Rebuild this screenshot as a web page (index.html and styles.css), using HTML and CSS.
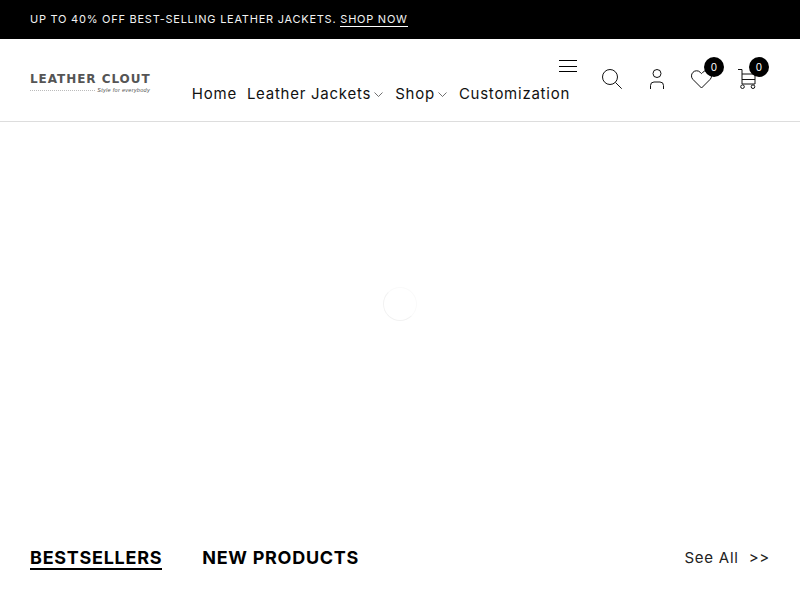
FILE: index.html
```html
<!DOCTYPE html>
<html lang="en">
<head>
    <meta charset="UTF-8">
    <meta name="viewport" content="width=device-width, initial-scale=1.0">
    <title>Leather Clout</title>
    <link rel="stylesheet" href="styles.css">
</head>
<body>
    <div class="announcement">
        UP TO 40% OFF BEST-SELLING LEATHER JACKETS. <a href="#" class="announcement-link">SHOP NOW</a>
    </div>

    <header class="site-header">
        <a href="#" class="logo">
            <span class="logo-name">LEATHER CLOUT</span>
            <span class="logo-tagline"><span class="logo-line"></span><span class="logo-tag-text">Style for everybody</span></span>
        </a>

        <div class="header-menu">
            <button class="menu-toggle" aria-label="Menu">
                <svg width="18" height="12" viewBox="0 0 18 12" fill="none" stroke="#000" stroke-width="1"><path d="M0 .5h18M0 6.5h18M0 11.5h18"/></svg>
            </button>
            <nav class="main-nav">
                <a href="#">Home</a>
                <a href="#">Leather Jackets<svg class="chevron" width="9" height="5" viewBox="0 0 9 5" fill="none" stroke="#333" stroke-width=".7"><path d="M.5.5l4 4 4-4"/></svg></a>
                <a href="#">Shop<svg class="chevron" width="9" height="5" viewBox="0 0 9 5" fill="none" stroke="#333" stroke-width=".7"><path d="M.5.5l4 4 4-4"/></svg></a>
                <a href="#">Customization</a>
            </nav>
        </div>

        <div class="header-icons">
            <a href="#" class="icon-link" aria-label="Search">
                <svg width="20" height="20" viewBox="0 0 20 20" fill="none" stroke="#111" stroke-width="1"><circle cx="8" cy="8" r="7.500"/><path d="M13.400 13.400l6.300 6.300"/></svg>
            </a>
            <a href="#" class="icon-link" aria-label="Account">
                <svg width="14" height="20" viewBox="0 0 14 20" fill="none" stroke="#111" stroke-width="1"><circle cx="7" cy="4.500" r="4"/><path d="M.5 20v-3.500a3.500 3.500 0 0 1 3.500-3.500h6a3.500 3.500 0 0 1 3.500 3.500V20"/></svg>
            </a>
            <a href="#" class="icon-link" aria-label="Wishlist">
                <svg width="21" height="19" viewBox="0 0 21 19" fill="none" stroke="#111" stroke-width="1"><path d="M10.500 18L2 9.500a5 5 0 0 1 0-7.200 5 5 0 0 1 7.200 0l1.300 1.300 1.300-1.300a5 5 0 0 1 7.200 0 5 5 0 0 1 0 7.200z"/></svg>
                <span class="badge">0</span>
            </a>
            <a href="#" class="icon-link" aria-label="Cart">
                <svg width="18" height="20" viewBox="0 0 18 20" fill="none" stroke="#111" stroke-width="1"><path d="M0 .5h4v14.500h13V5H4M4 10.500h13"/><circle cx="4.500" cy="17.700" r="1.800"/><circle cx="15" cy="17.700" r="1.800"/></svg>
                <span class="badge">0</span>
            </a>
        </div>
    </header>

    <main>
        <div class="hero-loading">
            <div class="spinner"></div>
        </div>

        <section class="products-head">
            <div class="tabs">
                <a href="#" class="tab tab-active">BESTSELLERS</a>
                <a href="#" class="tab">NEW PRODUCTS</a>
            </div>
            <a href="#" class="see-all">See All <span class="see-all-arrows">&gt;&gt;</span></a>
        </section>
    </main>
</body>
</html>
```
FILE: styles.css
```css
* {
    box-sizing: border-box;
}

html, body {
    height: 100%;
}

body {
    margin: 0;
    font-family: Inter, "Liberation Sans", sans-serif;
    color: #000;
    background-color: #fff;
    overflow: hidden;
}

a {
    color: inherit;
    text-decoration: none;
}

.announcement {
    height: 39px;
    padding: 0 30px 1px;
    display: flex;
    align-items: center;
    gap: 4px;
    background-color: #000;
    color: #f2f2f2;
    font-size: 11px;
    letter-spacing: .75px;
}

.announcement-link {
    line-height: 14px;
    border-bottom: 1px solid #fff;
    margin-top: 1px;
}

.site-header {
    height: 83px;
    padding: 0 30px;
    display: flex;
    border-bottom: 1px solid #ddd;
}

.logo {
    width: 120px;
    margin-top: 34px;
    display: flex;
    flex-direction: column;
}

.logo-name {
    font-family: "DejaVu Sans", sans-serif;
    font-size: 12px;
    font-weight: 700;
    line-height: 13px;
    letter-spacing: .95px;
    color: #555;
    white-space: nowrap;
}

.logo-tagline {
    display: flex;
    align-items: center;
    gap: 2px;
    height: 6px;
    margin-top: 1px;
}

.logo-line {
    flex: 1;
    border-top: 1px dotted #bbb;
}

.logo-tag-text {
    font-family: "Liberation Sans", sans-serif;
    font-size: 5.500px;
    font-style: italic;
    letter-spacing: .3px;
    color: #555;
    white-space: nowrap;
}

.header-menu {
    width: 439px;
    display: flex;
    flex-direction: column;
    align-items: flex-end;
    padding-right: 12px;
}

.menu-toggle {
    height: 12px;
    margin-top: 21px;
    padding: 0;
    display: block;
    background: none;
    border: none;
}

.menu-toggle svg {
    display: block;
}

.main-nav {
    margin-top: 13px;
    margin-right: 7px;
    display: flex;
    gap: 10px;
    font-size: 15px;
    line-height: 18px;
    letter-spacing: .75px;
    color: #111;
    white-space: nowrap;
}

.chevron {
    margin: 0 2px 0 3px;
    vertical-align: 2px;
}

.header-icons {
    display: flex;
}

.icon-link {
    position: relative;
    width: 45px;
    height: 82px;
    padding-bottom: 2px;
    display: flex;
    align-items: center;
    justify-content: center;
}

.badge {
    position: absolute;
    top: 18px;
    left: 25px;
    width: 20px;
    height: 20px;
    border-radius: 50%;
    background-color: #000;
    color: #fff;
    font-size: 10px;
    line-height: 20px;
    text-align: center;
}

.hero-loading {
    height: 364px;
    display: flex;
    align-items: center;
    justify-content: center;
}

.spinner {
    width: 34px;
    height: 34px;
    border: 1px solid #f2f2f2;
    border-radius: 50%;
    border-top-color: #fafafa;
    border-right-color: #fafafa;
}

.products-head {
    padding: 61px 30px 0;
    display: flex;
    align-items: flex-start;
    justify-content: space-between;
}

.tabs {
    display: flex;
    gap: 40px;
}

.tab {
    font-size: 18px;
    font-weight: 700;
    line-height: 21px;
    letter-spacing: .72px;
}

.tab-active {
    border-bottom: 2px solid #000;
}

.see-all {
    font-size: 15px;
    line-height: 21px;
    letter-spacing: .75px;
    color: #222;
}

.see-all-arrows {
    margin-left: 5px;
}
```
